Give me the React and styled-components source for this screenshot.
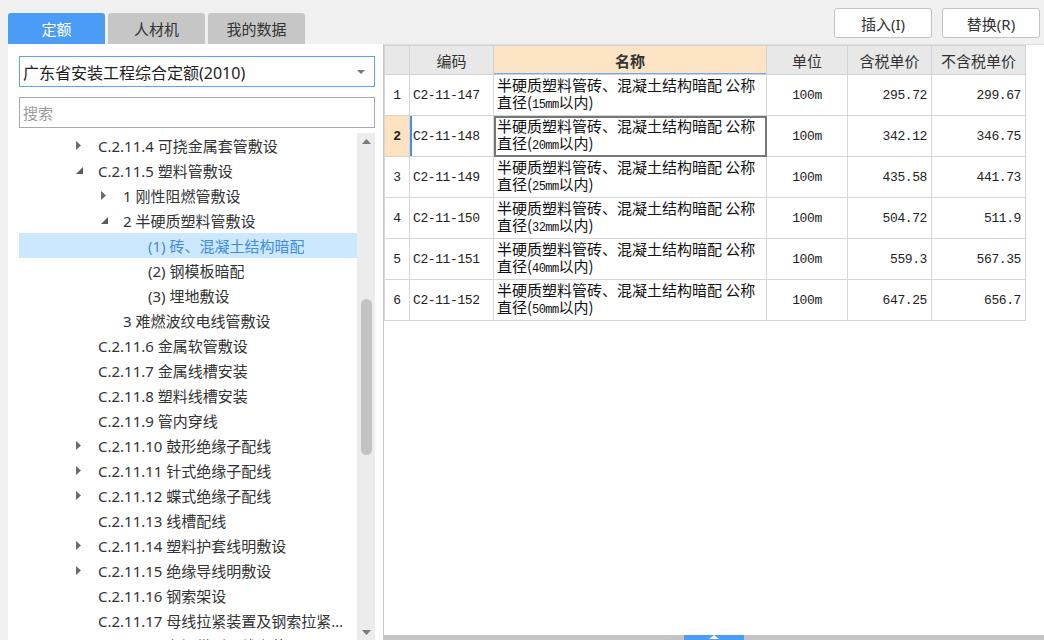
import React from "react";
import styled, { createGlobalStyle } from "styled-components";

const GlobalStyle = createGlobalStyle`
  html, body {
    margin: 0;
    padding: 0;
    background: #f0f0f0;
  }
  body {
    font-family: "Noto Sans", "Noto Sans CJK SC", sans-serif;
    color: #333;
  }
  * {
    box-sizing: border-box;
  }
`;

const treeItems = [
  { depth: 2, label: "C.2.11.4 可挠金属套管敷设", arrow: "closed" },
  { depth: 2, label: "C.2.11.5 塑料管敷设", arrow: "open" },
  { depth: 3, label: "1 刚性阻燃管敷设", arrow: "closed" },
  { depth: 3, label: "2 半硬质塑料管敷设", arrow: "open" },
  { depth: 4, label: "(1) 砖、混凝土结构暗配", selected: true },
  { depth: 4, label: "(2) 钢模板暗配" },
  { depth: 4, label: "(3) 埋地敷设" },
  { depth: 3, label: "3 难燃波纹电线管敷设" },
  { depth: 2, label: "C.2.11.6 金属软管敷设" },
  { depth: 2, label: "C.2.11.7 金属线槽安装" },
  { depth: 2, label: "C.2.11.8 塑料线槽安装" },
  { depth: 2, label: "C.2.11.9 管内穿线" },
  { depth: 2, label: "C.2.11.10 鼓形绝缘子配线", arrow: "closed" },
  { depth: 2, label: "C.2.11.11 针式绝缘子配线", arrow: "closed" },
  { depth: 2, label: "C.2.11.12 蝶式绝缘子配线", arrow: "closed" },
  { depth: 2, label: "C.2.11.13 线槽配线" },
  { depth: 2, label: "C.2.11.14 塑料护套线明敷设", arrow: "closed" },
  { depth: 2, label: "C.2.11.15 绝缘导线明敷设", arrow: "closed" },
  { depth: 2, label: "C.2.11.16 钢索架设" },
  { depth: 2, label: "C.2.11.17 母线拉紧装置及钢索拉紧装置制作安装" },
  { depth: 2, label: "C.2.11.18 车间带形母线安装", arrow: "closed" },
];

const rows = [
  { code: "C2-11-147", size: "15", tax: "295.72", noTax: "299.67" },
  { code: "C2-11-148", size: "20", tax: "342.12", noTax: "346.75", current: true },
  { code: "C2-11-149", size: "25", tax: "435.58", noTax: "441.73" },
  { code: "C2-11-150", size: "32", tax: "504.72", noTax: "511.9" },
  { code: "C2-11-151", size: "40", tax: "559.3", noTax: "567.35" },
  { code: "C2-11-152", size: "50", tax: "647.25", noTax: "656.7" },
];

const TreeArrow = ({ type }) => {
  if (type === "closed") {
    return (
      <svg width="6" height="9" viewBox="0 0 6 9">
        <polygon points="0,0 5,4.5 0,9" fill="#6a6a6a" />
      </svg>
    );
  }
  if (type === "open") {
    return (
      <svg width="7" height="7" viewBox="0 0 7 7">
        <polygon points="7,0 7,7 0,7" fill="#5a5a5a" />
      </svg>
    );
  }
  return null;
};

const App = () => {
  return (
    <>
      <GlobalStyle />
      <Page>
        <LeftCol>
          <TabBar>
            <Tab $active>定额</Tab>
            <Tab>人材机</Tab>
            <Tab>我的数据</Tab>
          </TabBar>
          <LeftPanel>
            <Select>
              <span>广东省安装工程综合定额(2010)</span>
              <Caret />
            </Select>
            <Search>搜索</Search>
            <TreeWrap>
              <TreeList>
                {treeItems.map((item, i) => (
                  <TreeRow key={i} $depth={item.depth} $selected={item.selected}>
                    <ArrowBox>
                      <TreeArrow type={item.arrow} />
                    </ArrowBox>
                    <TreeLabel>{item.label}</TreeLabel>
                  </TreeRow>
                ))}
              </TreeList>
              <VScroll>
                <ScrollArrow>
                  <svg width="9" height="5" viewBox="0 0 9 5">
                    <polygon points="0,5 4.5,0 9,5" fill="#7a7a7a" />
                  </svg>
                </ScrollArrow>
                <ScrollTrack>
                  <Thumb />
                </ScrollTrack>
                <ScrollArrow>
                  <svg width="9" height="5" viewBox="0 0 9 5">
                    <polygon points="0,0 9,0 4.5,5" fill="#7a7a7a" />
                  </svg>
                </ScrollArrow>
              </VScroll>
            </TreeWrap>
          </LeftPanel>
        </LeftCol>

        <RightCol>
          <Toolbar>
            <ToolButton>插入(I)</ToolButton>
            <ToolButton>替换(R)</ToolButton>
          </Toolbar>
          <TablePane>
            <Grid>
              <colgroup>
                <col style={{ width: 25 }} />
                <col style={{ width: 84 }} />
                <col style={{ width: 273 }} />
                <col style={{ width: 81 }} />
                <col style={{ width: 84 }} />
                <col style={{ width: 94 }} />
              </colgroup>
              <thead>
                <tr>
                  <Th />
                  <Th>编码</Th>
                  <Th $accent>名称</Th>
                  <Th>单位</Th>
                  <Th>含税单价</Th>
                  <Th>不含税单价</Th>
                </tr>
              </thead>
              <tbody>
                {rows.map((r, i) => (
                  <tr key={r.code}>
                    <NumCell $current={r.current}>{i + 1}</NumCell>
                    <CodeCell $current={r.current}>{r.code}</CodeCell>
                    <NameCell $current={r.current}>
                      半硬质塑料管砖、混凝土结构暗配 公称
                      <br />
                      直径(<Small>{r.size}mm</Small>以内)
                    </NameCell>
                    <UnitCell>100m</UnitCell>
                    <PriceCell>{r.tax}</PriceCell>
                    <PriceCell>{r.noTax}</PriceCell>
                  </tr>
                ))}
              </tbody>
            </Grid>
          </TablePane>
          <Splitter>
            <SplitHandle>
              <svg width="10" height="4" viewBox="0 0 10 4">
                <polygon points="0,4 5,0 10,4" fill="#fff" />
              </svg>
            </SplitHandle>
          </Splitter>
        </RightCol>
      </Page>
    </>
  );
};

const Page = styled.div`
  width: 1044px;
  height: 640px;
  overflow: hidden;
  display: flex;
  padding-left: 8px;
`;

const LeftCol = styled.div`
  width: 375px;
  display: flex;
  flex-direction: column;
`;

const TabBar = styled.div`
  height: 44px;
  padding-top: 13px;
  display: flex;
  gap: 3px;
`;

const Tab = styled.div`
  width: 97px;
  height: 31px;
  border-radius: 3px 3px 0 0;
  display: flex;
  align-items: center;
  justify-content: center;
  font-size: 15px;
  background: ${({ $active }) => ($active ? "#4a9cf5" : "#c6c6c6")};
  color: ${({ $active }) => ($active ? "#fff" : "#333")};
`;

const LeftPanel = styled.div`
  flex: 1;
  min-height: 0;
  background: #fff;
  padding: 12px 8px 0 11px;
  display: flex;
  flex-direction: column;
`;

const Select = styled.div`
  height: 31px;
  border: 1px solid #5ba3f3;
  display: flex;
  align-items: center;
  justify-content: space-between;
  padding: 0 9px 0 3px;
  font-size: 16px;
  color: #222;
`;

const Caret = styled.span`
  width: 0;
  height: 0;
  border-left: 4px solid transparent;
  border-right: 4px solid transparent;
  border-top: 4px solid #777;
`;

const Search = styled.div`
  margin-top: 10px;
  height: 31px;
  border: 1px solid #a9a9a9;
  display: flex;
  align-items: center;
  padding-left: 3px;
  font-size: 15px;
  color: #9a9a9a;
`;

const TreeWrap = styled.div`
  margin-top: 5px;
  flex: 1;
  min-height: 0;
  display: flex;
  overflow: hidden;
`;

const TreeList = styled.div`
  flex: 1;
  min-width: 0;
  overflow: hidden;
`;

const TreeRow = styled.div`
  height: 25px;
  display: flex;
  align-items: center;
  padding-left: ${({ $depth }) => $depth * 25 + 7}px;
  padding-right: 10px;
  font-size: 15px;
  background: ${({ $selected }) => ($selected ? "#cce8ff" : "transparent")};
  color: ${({ $selected }) => ($selected ? "#3f8ce0" : "#333")};
`;

const ArrowBox = styled.span`
  width: 22px;
  flex: none;
  display: flex;
  align-items: center;
`;

const TreeLabel = styled.span`
  white-space: nowrap;
  overflow: hidden;
  text-overflow: ellipsis;
`;

const VScroll = styled.div`
  width: 18px;
  flex: none;
  background: #ececec;
  display: flex;
  flex-direction: column;
`;

const ScrollArrow = styled.div`
  height: 16px;
  display: flex;
  align-items: center;
  justify-content: center;
`;

const ScrollTrack = styled.div`
  flex: 1;
  padding-top: 150px;
  display: flex;
  justify-content: center;
`;

const Thumb = styled.div`
  width: 11px;
  height: 156px;
  border-radius: 6px;
  background: #c3c3c3;
`;

const RightCol = styled.div`
  flex: 1;
  min-width: 0;
  display: flex;
  flex-direction: column;
`;

const Toolbar = styled.div`
  height: 44px;
  display: flex;
  justify-content: flex-end;
  align-items: flex-start;
  gap: 10px;
  padding: 8px 4px 0 0;
`;

const ToolButton = styled.button`
  width: 98px;
  height: 30px;
  background: #fff;
  border: 1px solid #c3c3c3;
  border-radius: 3px;
  font-family: "Noto Sans", "Noto Sans CJK SC", sans-serif;
  font-size: 15px;
  color: #333;
  padding: 0;
`;

const TablePane = styled.div`
  flex: 1;
  min-height: 0;
  background: #fff;
  border-left: 1px solid #c8c8c8;
  border-top: 1px solid #dcdcdc;
  overflow: hidden;
`;

const Grid = styled.table`
  border-collapse: collapse;
  table-layout: fixed;
  width: 642px;
`;

const Th = styled.th`
  height: 29px;
  padding: 0;
  border: 1px solid #d2d2d2;
  background: ${({ $accent }) => ($accent ? "#fde4c4" : "#e8e8e8")};
  box-shadow: ${({ $accent }) => ($accent ? "inset 0 -1px 0 #6aaaf0" : "none")};
  font-family: "Noto Sans CJK SC", sans-serif;
  font-size: 15px;
  font-weight: ${({ $accent }) => ($accent ? 700 : 400)};
  color: #333;
  text-align: center;
`;

const Td = styled.td`
  height: 41px;
  padding: 0 3px;
  border: 1px solid #d6d6d6;
  vertical-align: middle;
  font-family: "Liberation Mono", monospace;
  font-size: 13px;
  letter-spacing: -0.4px;
  color: #222;
  white-space: nowrap;
`;

const NumCell = styled(Td)`
  text-align: center;
  padding: 0;
  background: ${({ $current }) => ($current ? "#fde2bf" : "#fff")};
  font-weight: ${({ $current }) => ($current ? 700 : 400)};
`;

const CodeCell = styled(Td)`
  box-shadow: ${({ $current }) => ($current ? "inset 2px 0 0 #3f8ef0" : "none")};
`;

const NameCell = styled(Td)`
  font-family: "Noto Sans CJK SC", sans-serif;
  font-size: 15px;
  letter-spacing: 0;
  line-height: 17px;
  color: #111;
  outline: ${({ $current }) => ($current ? "2px solid #767676" : "none")};
  outline-offset: -2px;
`;

const Small = styled.span`
  font-family: "Liberation Mono", monospace;
  font-size: 12px;
  letter-spacing: -0.6px;
`;

const UnitCell = styled(Td)`
  text-align: center;
`;

const PriceCell = styled(Td)`
  text-align: right;
  padding-right: 4px;
`;

const Splitter = styled.div`
  height: 5px;
  flex: none;
  background: #c4c4c4;
  display: flex;
  justify-content: center;
`;

const SplitHandle = styled.div`
  width: 60px;
  height: 5px;
  background: #4a9cf5;
  display: flex;
  justify-content: center;
  align-items: flex-start;
`;

export default App;
